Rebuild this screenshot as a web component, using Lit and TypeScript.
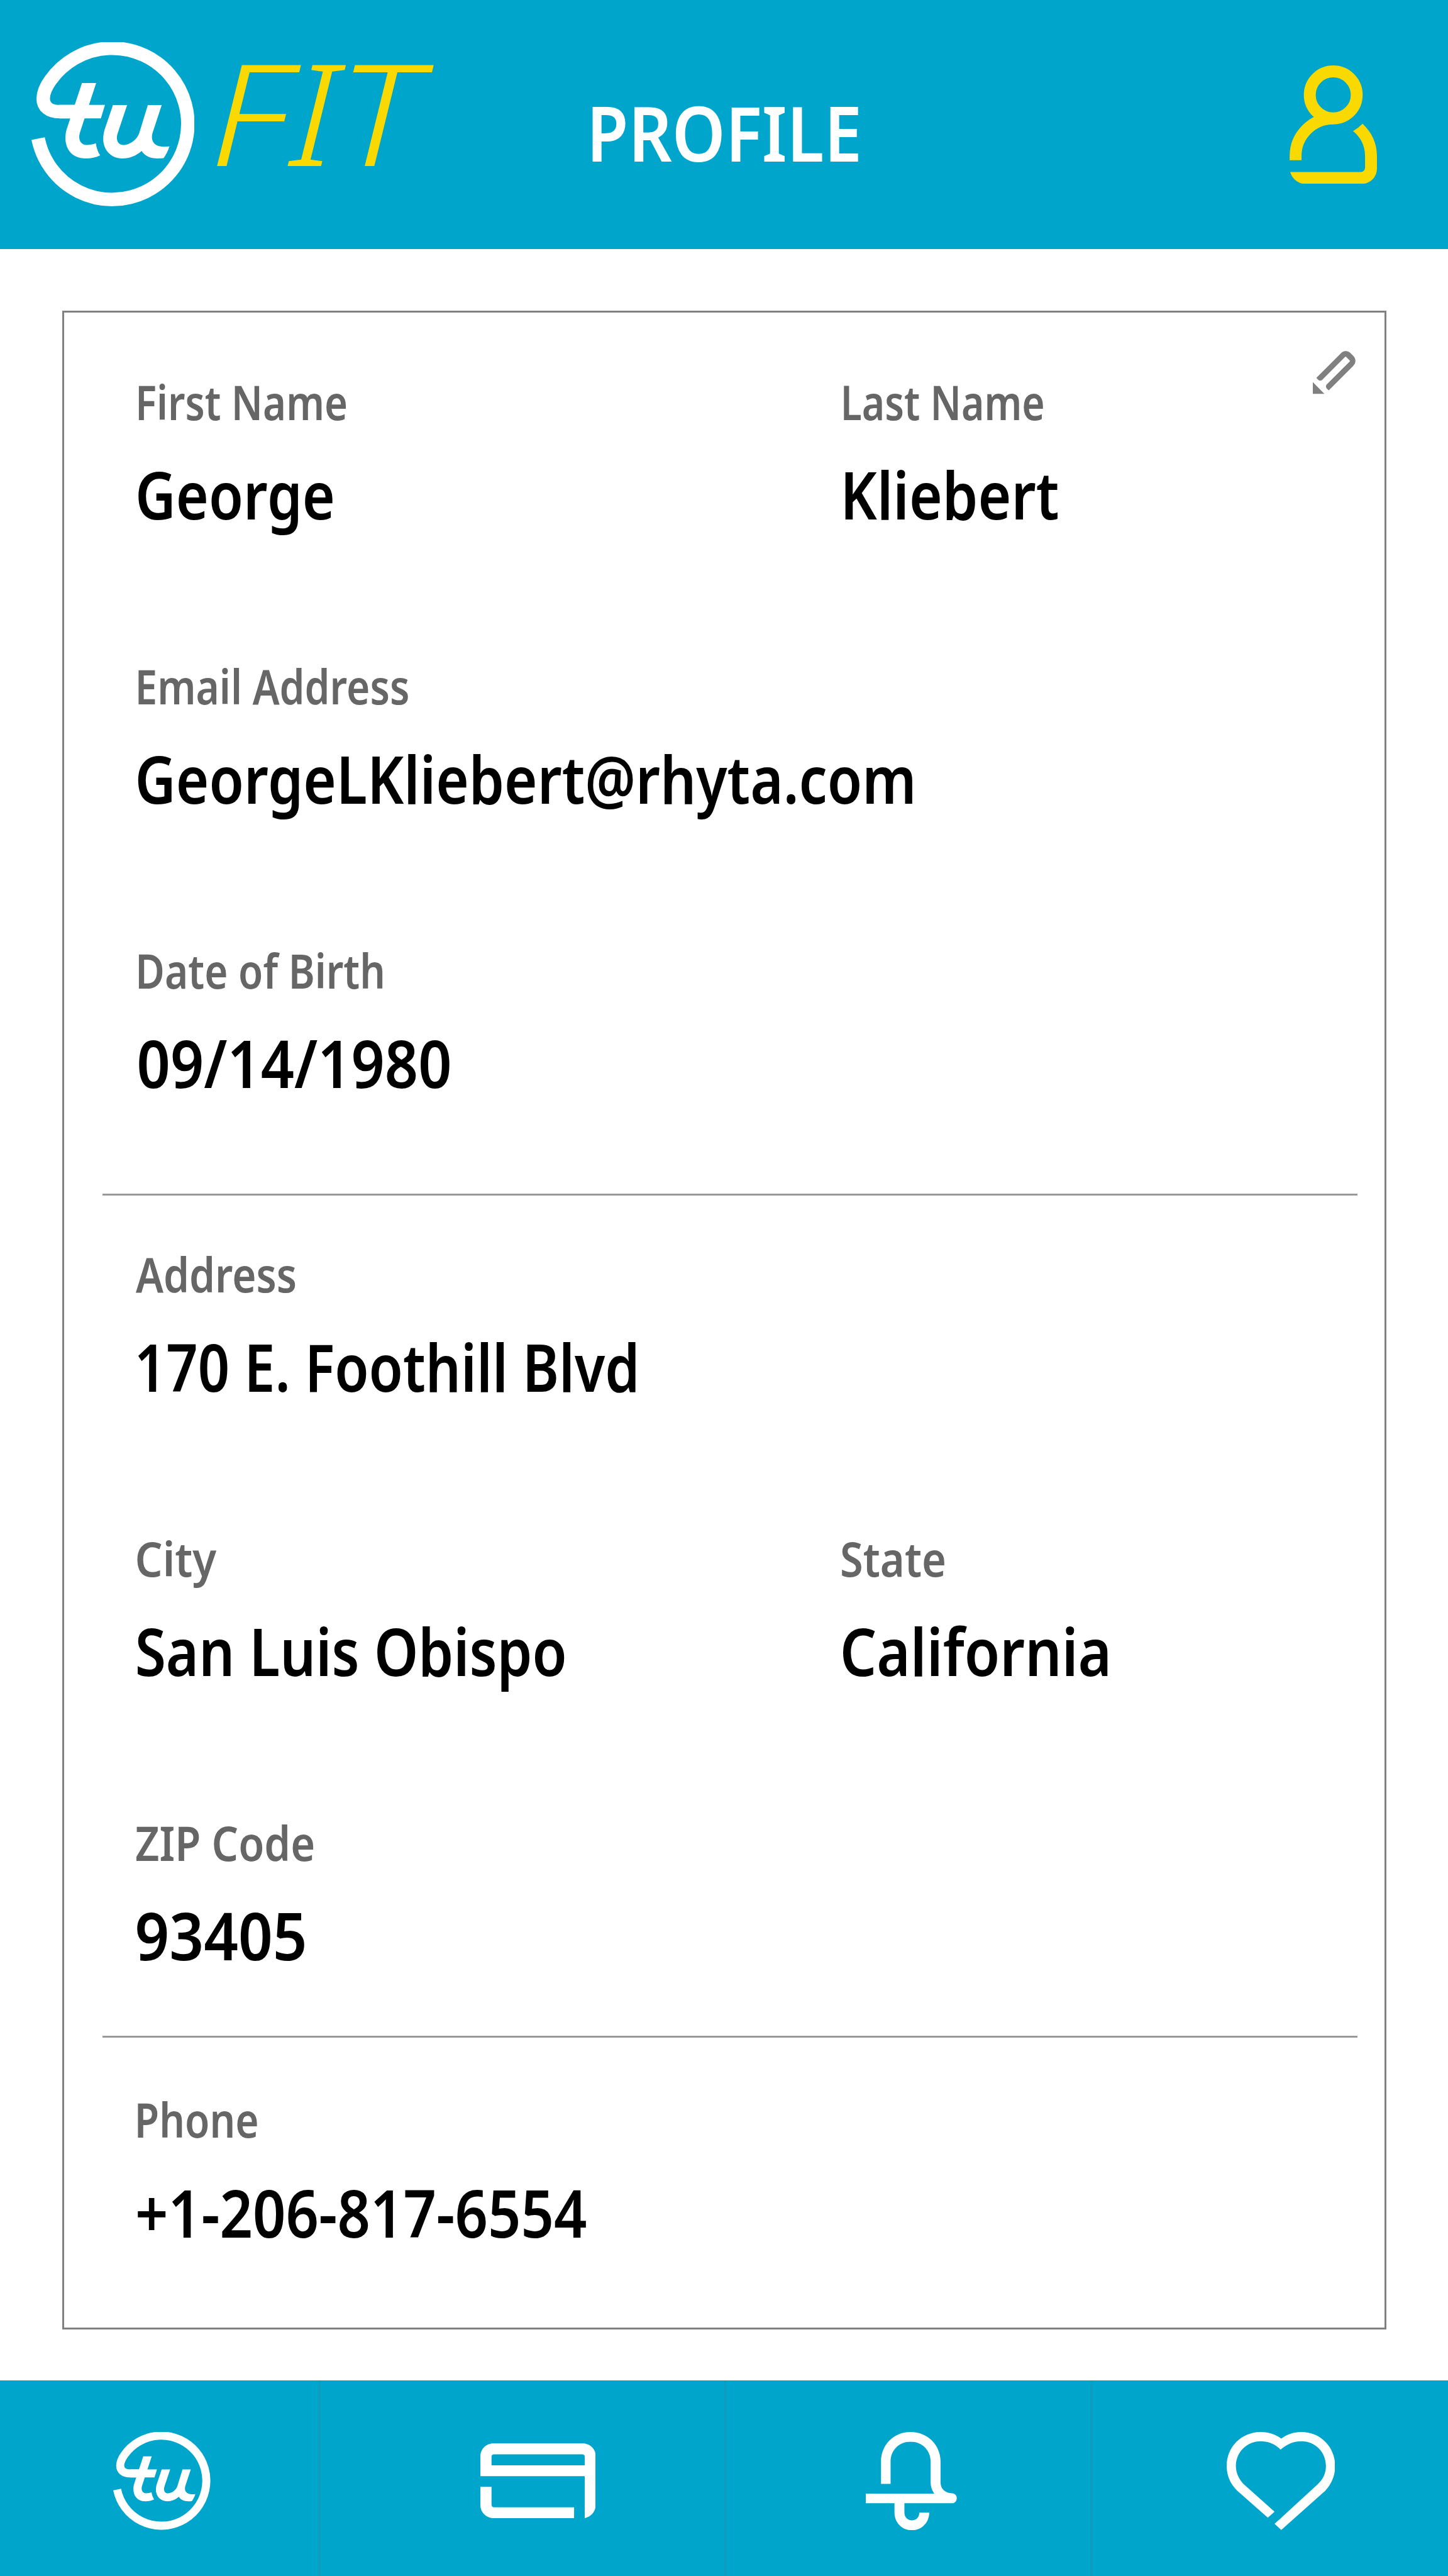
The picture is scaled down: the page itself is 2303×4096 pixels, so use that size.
import { LitElement, html, css, svg } from 'lit';
import { customElement, property, query } from 'lit/decorators.js';

/** One line of text whose ink starts at `inset` and spans `span` design units. */
@customElement('fit-text')
class FitText extends LitElement {
  @property() text = '';
  @property({ type: Number }) inset = 0;
  @property({ type: Number }) span = 100;
  @query('.line') line!: HTMLElement;

  static styles = css`
    :host { display: block; white-space: nowrap; }
    .line { display: inline-block; transform-origin: 0 50%; }
  `;

  updated() {
    const unit = window.innerWidth / 3126;
    const cs = getComputedStyle(this);
    const ctx = document.createElement('canvas').getContext('2d')!;
    ctx.font = `${cs.fontStyle} ${cs.fontWeight} ${cs.fontSize} ${cs.fontFamily}`;
    const m = ctx.measureText(this.text);
    const ink = m.actualBoundingBoxLeft + m.actualBoundingBoxRight;
    const scale = (this.span * unit) / ink;
    const shift = this.inset * unit + m.actualBoundingBoxLeft * scale;
    this.line.style.transform = `translateX(${shift}px) scaleX(${scale})`;
  }

  render() {
    return html`<span class="line">${this.text}</span>`;
  }
}

interface FieldData { label: string; lx: number; lw: number; value: string; vx: number; vw: number; }
const f = (label: string, lx: number, lw: number, value: string, vx: number, vw: number): FieldData =>
  ({ label, lx, lw, value, vx, vw });

const SECTIONS: { name: string; rows: FieldData[][] }[] = [
  {
    name: 'personal',
    rows: [
      [f('First Name', 6.5, 447.5, 'George', 5.5, 419.5), f('Last Name', 5, 431, 'Kliebert', 8, 459)],
      [f('Email Address', 6, 581.5, 'GeorgeLKliebert@rhyta.com', 5, 1672)],
      [f('Date of Birth', 6, 527, '09/14/1980', 7, 670)],
    ],
  },
  {
    name: 'address',
    rows: [
      [f('Address', 0, 344, '170 E. Foothill Blvd', 5, 1074)],
      [f('City', 3, 172, 'San Luis Obispo', 4, 921), f('State', 1, 222, 'California', 4, 571)],
      [f('ZIP Code', 1, 382.5, '93405', 3, 360.5)],
    ],
  },
  { name: 'contact', rows: [[f('Phone', 4, 258, '+1-206-817-6554', 3.5, 969)]] },
];

const tuMark = svg`
  <path fill="none" stroke="currentColor" stroke-width="29.2"
    d="M82 299.3A163.2 163.2 0 1 0 109 172.8C100.5 184.5 93 199.5 93 213C93 230 106 241 128 241H170"/>
  <path fill="currentColor" d="M128 226.4H226.4L217.5 255.6H128Z"/>
  <path fill="currentColor" d="M176.7 179.3H207.3L172 287C168 301 174 313 187 313C194 313 201 312 206.6 309.3C208 319 211 328 216 335.3C207 340 196 342 185 342C155 342 141 322 141 298C141 291 142 284 144 278Z"/>
  <path fill="currentColor" d="M243.6 226.6H274.2L254 287C249 301 254 313 265.3 313C281 313 297 300 301 285L318.9 226.6H348.9L329 287C325 301 330 316 352 316.5C357 317 361 316.5 365.4 316C363 325 358 334 353.3 341C349 342 345 342 340 342C325 342 313 337 305.5 325.7C294 336 280 342 263.4 342C239 342 222.6 323 222.6 300C222.6 293 224 285 225.5 280Z"/>`;

@customElement('app-root')
class AppRoot extends LitElement {
  static styles = css`
    :host {
      --u: calc(100vw / 3126);
      --brand: #00a5cc;
      --accent: #fad900;
      display: flex;
      flex-direction: column;
      height: 100vh;
      background: #fff;
      font-family: "Noto Sans", sans-serif;
      overflow: hidden;
    }
    svg { display: block; flex: none; }

    .header {
      display: flex;
      align-items: flex-start;
      flex: none;
      box-sizing: border-box;
      height: calc(var(--u) * 537.7);
      padding-left: calc(var(--u) * 67.6);
      background: var(--brand);
      color: #fff;
    }
    .logo { width: calc(var(--u) * 351.4); height: calc(var(--u) * 355.7); margin-top: calc(var(--u) * 91); }
    .fit {
      width: calc(var(--u) * 810);
      margin: calc(var(--u) * 91.5) 0 0 calc(var(--u) * 49);
      font-size: calc(var(--u) * 305.3);
      line-height: calc(var(--u) * 300);
      font-style: italic;
      font-weight: 270;
      color: var(--accent);
    }
    .title {
      width: calc(var(--u) * 575);
      margin-top: calc(var(--u) * 195.4);
      font-size: calc(var(--u) * 164);
      line-height: calc(var(--u) * 180);
      font-weight: 560;
    }
    .user {
      width: calc(var(--u) * 189);
      height: calc(var(--u) * 255.7);
      margin: calc(var(--u) * 141) calc(var(--u) * 153) 0 auto;
      color: var(--accent);
    }

    .card {
      position: relative;
      flex: none;
      box-sizing: border-box;
      width: calc(var(--u) * 2859);
      height: calc(var(--u) * 4357);
      margin: calc(var(--u) * 133.3) 0 0 calc(var(--u) * 133.8);
      border: 3px solid #808080;
    }
    .edit {
      position: absolute;
      top: calc(var(--u) * 82.8);
      right: calc(var(--u) * 62.7);
      width: calc(var(--u) * 92);
      height: calc(var(--u) * 93);
      color: #808080;
    }
    .section {
      display: grid;
      row-gap: calc(var(--u) * 274.6);
      margin: 0 calc(var(--u) * 58.5) 0 calc(var(--u) * 83);
      padding-left: calc(var(--u) * 73);
      border-bottom: 3px solid #999;
    }
    .personal { padding-top: calc(var(--u) * 132); padding-bottom: calc(var(--u) * 202.2); }
    .address { padding-top: calc(var(--u) * 110); padding-bottom: calc(var(--u) * 136.4); }
    .contact { padding-top: calc(var(--u) * 118); border-bottom: 0; }
    .row { display: grid; grid-template-columns: calc(var(--u) * 1522) 1fr; }
    .field { display: grid; row-gap: calc(var(--u) * 59.2); min-width: 0; }
    .label {
      font-size: calc(var(--u) * 102.2);
      line-height: calc(var(--u) * 120);
      font-weight: 580;
      color: #666;
    }
    .value {
      font-size: calc(var(--u) * 142.9);
      line-height: calc(var(--u) * 160);
      font-weight: 560;
      color: #000;
    }

    .nav {
      display: grid;
      grid-template-columns: 692.8fr 875fr 790.9fr 767.3fr;
      height: calc(var(--u) * 421.7);
      flex: none;
      margin-top: auto;
      background: var(--brand);
      color: #fff;
    }
    .tab { box-sizing: border-box; border-right: 3px solid #1399b9; }
    .tab:last-child { border-right: 0; }
    .tab svg { height: calc(var(--u) * 212); margin-top: calc(var(--u) * 110.7); }
    .tab .home { width: calc(var(--u) * 209.3); margin-left: calc(var(--u) * 244.8); }
    .tab .credit { width: calc(var(--u) * 249); height: calc(var(--u) * 161.7); margin: calc(var(--u) * 135.7) 0 0 calc(var(--u) * 343.7); }
    .tab .bell { width: calc(var(--u) * 197.4); margin-left: calc(var(--u) * 301.1); }
    .tab .heart { width: calc(var(--u) * 234.2); margin-left: calc(var(--u) * 289.3); }
  `;

  private field(d: FieldData) {
    return html`<div class="field">
      <fit-text class="label" .text=${d.label} .inset=${d.lx} .span=${d.lw}></fit-text>
      <fit-text class="value" .text=${d.value} .inset=${d.vx} .span=${d.vw}></fit-text>
    </div>`;
  }

  render() {
    return html`
      <header class="header">
        <svg class="logo" viewBox="67.6 91 351.4 355.7">${tuMark}</svg>
        <fit-text class="fit" .text=${'FIT'} .inset=${0} .span=${469.5}></fit-text>
        <fit-text class="title" .text=${'PROFILE'} .inset=${0} .span=${574.5}></fit-text>
        <svg class="user" viewBox="252 123 567 767" preserveAspectRatio="none">
          <g fill="none" stroke="currentColor" stroke-width="77">
            <ellipse cx="535" cy="314" rx="152" ry="152"/>
            <path d="M291 737V710A243.5 243.5 0 0 1 535 466.5"/>
          </g>
          <path fill="currentColor" d="M663 548Q697 530 725 501C783 555 818 625 818 710V790A99 99 0 0 1 719 890H353C310 890 270 860 256 813H714A27 27 0 0 0 741 786V710C741 640 710 585 663 548Z"/>
        </svg>
      </header>

      <main class="card">
        <svg class="edit" viewBox="402 353 276 279" fill="currentColor">
          <path d="M402 555V631H477Z"/>
          <path d="M425 527L583 369Q598 353 615 354Q633 353 648 369L664 385Q678 400 678 418Q679 435 664 450L505 609L492 596Q482 583 492 570L641 421Q644 418 641 415L618 392Q615 389 611 392L463 540Q450 550 437 540Z"/>
        </svg>
        ${SECTIONS.map((s) => html`<section class="section ${s.name}">
          ${s.rows.map((r) => html`<div class="row">${r.map((d) => this.field(d))}</div>`)}
        </section>`)}
      </main>

      <nav class="nav">
        <div class="tab"><svg class="home" viewBox="67.6 91 351.4 355.7">${tuMark}</svg></div>
        <div class="tab">
          <svg class="credit" viewBox="143 429 630 485" preserveAspectRatio="none" fill="currentColor">
            <path fill-rule="evenodd" d="M143 642V515C143 465 175 429 217 429H700C740 429 773 465 773 510V828C773 870 748 905 713 913V642ZM204 571V515Q204 500 219 500H698Q713 500 713 515V571Z"/>
            <path d="M143 711H204V826Q204 843 219 843H655V914H217C175 914 143 875 143 830Z"/>
          </svg>
        </div>
        <div class="tab">
          <svg class="bell" viewBox="90 354 258 636" preserveAspectRatio="none" fill="currentColor">
            <path d="M133 690V545C133 440 168 354 216 354C265 354 301 440 301 545V680C301 725 315 752 337 752C350 760 350 805 337 815H199V876C199 905 208 926 220 926C233 926 241 905 241 876H269C269 940 248 990 220 990C192 990 171 940 171 876V815H90V753H283C276 730 273 705 273 680V545C273 470 248 417 216 417C185 417 160 470 160 545V690Z"/>
          </svg>
        </div>
        <div class="tab">
          <svg class="heart" viewBox="1108 354 306 636" preserveAspectRatio="none" fill="currentColor">
            <path d="M1224 909L1138 735C1118 690 1108 635 1108 575C1108 450 1150 354 1204 354C1226 354 1246 370 1262 397C1278 370 1297 354 1319 354C1372 354 1414 450 1414 575C1414 635 1404 690 1386 735L1262 988L1243 949L1366 690C1380 660 1388 620 1388 575C1388 485 1358 414 1319 414C1298 414 1278 432 1260 468C1245 432 1226 414 1204 414C1165 414 1134 485 1134 575C1134 620 1143 660 1155 690L1243 870Z"/>
          </svg>
        </div>
      </nav>
    `;
  }
}
